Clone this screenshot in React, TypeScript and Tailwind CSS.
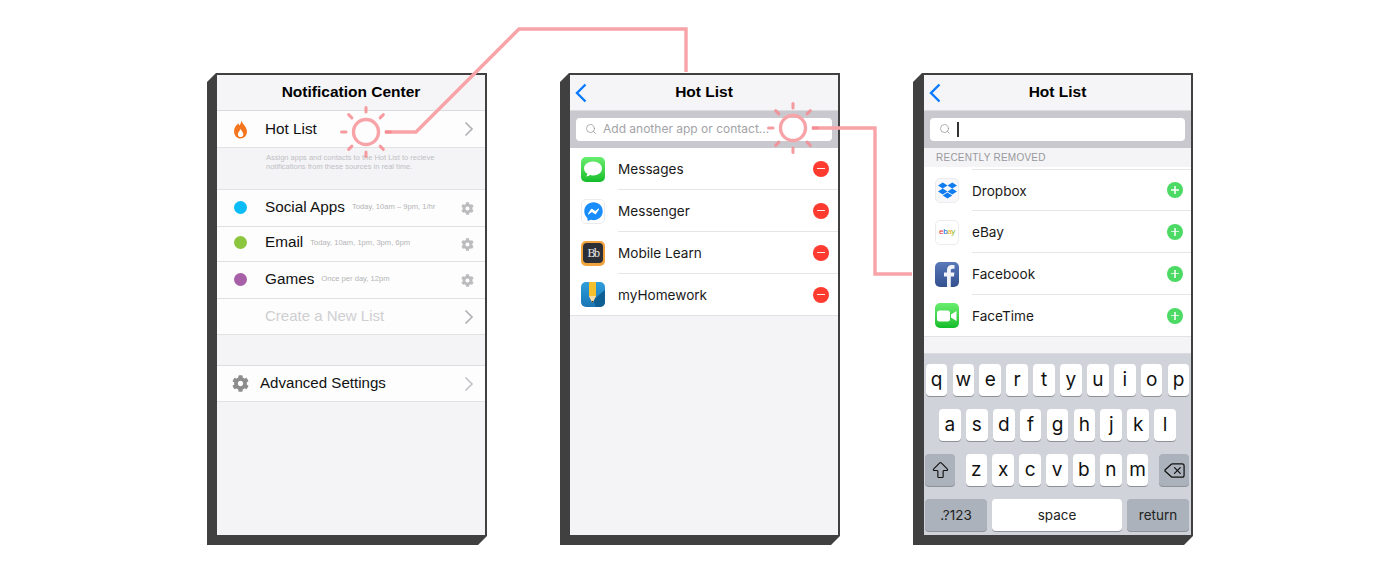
import type { ReactNode } from 'react'
import { ArrowBigUp, Delete, Search } from 'lucide-react'
import { FaCog, FaDropbox, FaFacebookMessenger } from 'react-icons/fa'

function Chevron({ light }: { light?: boolean }) {
  return (
    <svg width="10" height="16" viewBox="0 0 10 16" fill="none" className={light ? 'text-[#c4c4c8]' : 'text-[#b2b2b6]'}>
      <path d="M1.5 1.5 8 8l-6.5 6.5" stroke="currentColor" strokeWidth="1.7" />
    </svg>
  )
}

function Frame({ children, inset = 'pl-[10px]' }: { children: ReactNode; inset?: string }) {
  return (
    <div className={`h-[472px] w-[280px] bg-[#404040] pt-[2px] pr-[2px] pb-[10px] ${inset} [clip-path:polygon(9px_0,100%_0,100%_calc(100%-9px),calc(100%-9px)_100%,0_100%,0_9px)]`}>
      <div className="flex h-full flex-col overflow-hidden bg-[#f4f4f6]">{children}</div>
    </div>
  )
}

function NavBar({ title, back }: { title: string; back?: boolean }) {
  return (
    <div className="grid h-[36px] shrink-0 grid-cols-[1fr_auto_1fr] items-center border-b border-[#dcdcdf] bg-[#f5f5f7] font-['Liberation_Sans',sans-serif]">
      <div className="pl-[5px]">
        {back && (
          <svg width="12" height="20" viewBox="0 0 12 20" fill="none" className="block">
            <path d="M10.500 1.500 2 10l8.500 8.500" stroke="#0a7aff" strokeWidth="2.4" />
          </svg>
        )}
      </div>
      <div className="mb-[2px] text-[15.500px] font-bold text-black">{title}</div>
      <div />
    </div>
  )
}

function SearchField({ children }: { children: ReactNode }) {
  return (
    <div className="flex h-[37px] shrink-0 items-center bg-[#c8c8ce] px-[6px] pb-[1px]">
      <div className="flex h-[23px] w-full items-center gap-[6px] rounded-[4px] bg-white pl-[9px] font-[Inter,sans-serif]">
        <Search size={12} strokeWidth={1.4} className="text-[#8e8e93]" />
        {children}
      </div>
    </div>
  )
}

function ListRow({ icon, label, sub, right, h, muted, lift = '' }: { icon?: ReactNode; label: string; sub?: string; right: ReactNode; h: string; muted?: boolean; lift?: string }) {
  return (
    <div className={`flex shrink-0 items-center border-b border-[#e2e2e4] bg-[#fdfdfd] pr-[11px] ${h}`}>
      <div className={`flex w-[48px] justify-center pr-[2px] ${lift}`}>{icon}</div>
      <div className={`${muted ? 'text-[15px] text-[#cfcfd2]' : 'text-[15.300px] text-[#111]'} ${lift}`}>{label}</div>
      {sub && <div className={`ml-[7px] text-[7.600px] text-[#b4b4b6] ${lift}`}>{sub}</div>}
      <div className="ml-auto flex">{right}</div>
    </div>
  )
}

function Dot({ color }: { color: string }) {
  return <div className={`h-[13px] w-[13px] rounded-full ${color}`} />
}

function Flame() {
  return (
    <svg width="15" height="19" viewBox="0 0 15 20">
      <path d="M8 .5c.6 3-1 4.2-2 5.2-.4-.8-.6-1.500-.6-2.300C3 5.300.7 8 .7 11.800c0 4.300 3 7.700 6.800 7.700s6.800-3.200 6.800-7.300c0-4.700-3.800-6.900-6.300-11.700z" fill="#f4751d" />
      <path d="M7.600 9c.2 1.800-2.800 3.300-2.800 6 0 1.700 1.200 3 2.800 3s2.900-1.300 2.900-3c0-2.400-2.400-3.500-2.900-6z" fill="#fff" />
    </svg>
  )
}

function NotificationCenter() {
  const gear = <FaCog size={13} className="text-[#bcbcbe]" />
  return (
    <Frame>
      <NavBar title="Notification Center" />
      <div className="flex h-full flex-col font-['Liberation_Sans',sans-serif]">
        <ListRow h="h-[37px]" icon={<Flame />} label="Hot List" right={<Chevron />} />
        <div className="h-[42px] shrink-0 border-b border-[#e2e2e4] pt-[5px] pl-[49px] text-[7.500px] leading-[9px] text-[#c0c0c4]">
          Assign apps and contacts to the Hot List to recieve
          <br />
          notifications from these sources in real time.
        </div>
        <ListRow h="h-[37px]" lift="mb-[2px]" icon={<Dot color="bg-[#0abcf5]" />} label="Social Apps" sub="Today, 10am – 9pm, 1/hr" right={gear} />
        <ListRow h="h-[35px]" lift="mb-[3px]" icon={<Dot color="bg-[#8cc63f]" />} label="Email" sub="Today, 10am, 1pm, 3pm, 6pm" right={gear} />
        <ListRow h="h-[37px]" lift="mb-[2px]" icon={<Dot color="bg-[#a75fa8]" />} label="Games" sub="Once per day, 12pm" right={gear} />
        <ListRow h="h-[36px]" label="Create a New List" muted right={<Chevron />} />
        <div className="h-[31px] shrink-0 border-b border-[#dedee0]" />
        <div className="flex h-[36px] shrink-0 items-center border-b border-[#e2e2e4] bg-[#fdfdfd] pr-[11px] pl-[15px]">
          <FaCog size={17} className="text-[#8c8c8c]" />
          <div className="ml-[11px] text-[15.100px] text-[#111]">Advanced Settings</div>
          <div className="ml-auto flex">
            <Chevron light />
          </div>
        </div>
      </div>
    </Frame>
  )
}

function Tile({ className, children }: { className: string; children?: ReactNode }) {
  return <div className={`flex h-[25px] w-[24px] items-center justify-center overflow-hidden rounded-[5px] ${className}`}>{children}</div>
}

const tileWhite = 'border border-[#ececee] bg-white'

function AppRow({ icon, label, sign, first, last }: { icon: ReactNode; label: string; sign: 'plus' | 'minus'; first?: boolean; last?: boolean }) {
  const isPlus = sign === 'plus'
  return (
    <div className={`flex h-[42px] shrink-0 items-center bg-white pl-[11px] ${last ? 'border-b border-[#e2e2e4]' : ''}`}>
      <div className="shrink-0">{icon}</div>
      <div className={`ml-[13px] flex h-full flex-1 items-center border-[#e6e6e8] ${isPlus ? 'pr-[8px]' : 'pr-[9px]'} ${last ? '' : 'border-b'} ${first ? 'border-t' : ''}`}>
        <span className="pt-[2px] text-[13.600px] text-[#1a1a1a]">{label}</span>
        <div className={`relative ml-auto flex h-[16px] w-[16px] items-center justify-center rounded-full ${isPlus ? 'bg-[#4cd964]' : 'bg-[#ff3b30]'}`}>
          <div className={`h-[1.500px] w-[8px] ${isPlus ? 'bg-white/75' : 'bg-white/90'}`} />
          {isPlus && <div className="absolute h-[8px] w-[1.500px] bg-white/75" />}
        </div>
      </div>
    </div>
  )
}

function HotList() {
  return (
    <Frame>
      <NavBar title="Hot List" back />
      <SearchField>
        <span className="text-[12px] text-[#a3a3a8]">Add another app or contact...</span>
      </SearchField>
      <div className="font-[Inter,sans-serif]">
        <AppRow
          label="Messages"
          sign="minus"
          icon={
            <Tile className="bg-linear-to-b from-[#67ee6e] to-[#0cbd2a]">
              <svg width="20" height="18" viewBox="0 0 20 18">
                <path d="M10 1.500c5 0 9 3 9 7s-4 7-9 7c-1 0-2-.1-2.900-.4-1 .9-2.600 1.400-4.100 1.400.8-.7 1.300-1.600 1.400-2.700C2.300 12.600 1 10.700 1 8.500c0-4 4-7 9-7z" fill="#fff" />
              </svg>
            </Tile>
          }
        />
        <AppRow
          label="Messenger"
          sign="minus"
          icon={
            <Tile className={tileWhite}>
              <FaFacebookMessenger size={19} className="text-[#1a8dfc]" />
            </Tile>
          }
        />
        <AppRow
          label="Mobile Learn"
          sign="minus"
          icon={
            <Tile className="bg-[#f0a33c]">
              <div className="flex h-[20px] w-[20px] items-center justify-center rounded-[4px] bg-[#2c2f36] font-['Liberation_Serif',serif] text-[12px] leading-none tracking-[-1.500px] text-[#e8e8e8]">Bb</div>
            </Tile>
          }
        />
        <AppRow
          label="myHomework"
          sign="minus"
          last
          icon={
            <Tile className="bg-linear-to-b from-[#2f9fdc] to-[#1a75b5]">
              <svg width="24" height="25" viewBox="0 0 24 25">
                <path d="M12 18 24 8v17H15z" fill="#0f5f94" />
                <path d="M8 0h7v14l-3.500 7L8 14z" fill="#f6c02c" />
                <path d="M8 14h7l-3.500 7z" fill="#f3dcb0" />
                <path d="M10.500 19h2l-1 2z" fill="#333" />
              </svg>
            </Tile>
          }
        />
      </div>
    </Frame>
  )
}

function KeyCap({ children, wide, dark, className = '' }: { children: ReactNode; wide?: string; dark?: boolean; className?: string }) {
  return (
    <div className={`flex h-[32px] items-center justify-center rounded-[4px] shadow-[0_1px_0_#8e9198] ${dark ? 'bg-[#abb2bb]' : 'bg-white'} ${wide ?? 'w-[21.600px]'} ${className}`}>
      {children}
    </div>
  )
}

function Keyboard() {
  const letters = (keys: string) =>
    keys.split('').map((k) => (
      <KeyCap key={k} className="text-[19px] text-[#111]">
        {k}
      </KeyCap>
    ))
  return (
    <div className="flex h-full flex-col gap-[13px] border-t border-[#dcdce0] bg-[#d0d3da] pt-[10px] font-[Inter,sans-serif]">
      <div className="flex justify-center gap-[5.300px]">{letters('qwertyuiop')}</div>
      <div className="flex justify-center gap-[5.300px]">{letters('asdfghjkl')}</div>
      <div className="flex justify-between pr-[2px] pl-[1px]">
        <KeyCap dark wide="w-[30px]">
          <ArrowBigUp size={21} strokeWidth={1.3} className="text-[#111]" />
        </KeyCap>
        <div className="flex gap-[5.300px]">{letters('zxcvbnm')}</div>
        <KeyCap dark wide="w-[30px]">
          <Delete size={23} strokeWidth={1.3} className="text-[#111]" />
        </KeyCap>
      </div>
      <div className="flex justify-between pr-[2px] pl-[1px] text-[13.500px] text-[#222]">
        <KeyCap dark wide="w-[62px]">.?123</KeyCap>
        <KeyCap wide="w-[130px]">space</KeyCap>
        <KeyCap dark wide="w-[62px]">return</KeyCap>
      </div>
    </div>
  )
}

function HotListEditing() {
  return (
    <Frame inset="pl-[11px]">
      <NavBar title="Hot List" back />
      <SearchField>
        <div className="h-[15px] w-[1.500px] bg-[#333]" />
      </SearchField>
      <div className="h-[21px] shrink-0 bg-white">
        <div className="h-[19px] bg-[#f4f4f6] pt-[2px] pl-[12px] font-['Liberation_Sans',sans-serif] text-[10px] tracking-[0.25px] text-[#98989d]">
          RECENTLY REMOVED
        </div>
      </div>
      <div className="font-[Inter,sans-serif]">
        <AppRow
          label="Dropbox"
          sign="plus"
          first
          icon={
            <Tile className="border border-[#ececee] bg-[#f8f8fa]">
              <FaDropbox size={19} className="text-[#0f7df0]" />
            </Tile>
          }
        />
        <AppRow
          label="eBay"
          sign="plus"
          icon={
            <Tile className={tileWhite}>
              <span className="font-['Liberation_Sans',sans-serif] text-[8px] tracking-[-0.4px]">
                <span className="text-[#e53238]">e</span>
                <span className="text-[#0064d2]">b</span>
                <span className="text-[#f5af02]">a</span>
                <span className="text-[#86b817]">y</span>
              </span>
            </Tile>
          }
        />
        <AppRow
          label="Facebook"
          sign="plus"
          icon={
            <Tile className="bg-linear-to-b from-[#5a79b8] to-[#33508f]">
              <svg width="24" height="25" viewBox="0 0 24 25">
                <path d="M12 25V14.500H9V10.500h3V8c0-3.300 2-5 4.800-5 1.300 0 2.300.1 2.700.2v3.500h-1.900c-1.500 0-1.800.7-1.800 1.800v2h3.600l-.5 4h-3.100V25z" fill="#f2f4fa" />
              </svg>
            </Tile>
          }
        />
        <AppRow
          label="FaceTime"
          sign="plus"
          last
          icon={
            <Tile className="bg-linear-to-b from-[#67ee6e] to-[#0cbd2a]">
              <svg width="20" height="12" viewBox="0 0 20 12">
                <rect x="0" y="0.500" width="13" height="11" rx="2.500" fill="#fff" />
                <path d="M14 4.500 19.500 1v10L14 7.500z" fill="#fff" />
              </svg>
            </Tile>
          }
        />
      </div>
      <div className="h-[16px] shrink-0" />
      <Keyboard />
    </Frame>
  )
}

function Callout({ cx, cy }: { cx: number; cy: number }) {
  const rays = [0, 45, 90, 135, 180, 225, 270, 315]
  return (
    <g>
      <circle cx={cx} cy={cy} r="12.500" fill="none" stroke="#f8a3a8" strokeWidth="3.400" />
      {rays.map((deg) => (
        <line
          key={deg}
          x1={cx + 20 * Math.cos((deg * Math.PI) / 180)}
          y1={cy + 20 * Math.sin((deg * Math.PI) / 180)}
          x2={cx + 24.500 * Math.cos((deg * Math.PI) / 180)}
          y2={cy + 24.500 * Math.sin((deg * Math.PI) / 180)}
          stroke="#f48b91"
          strokeOpacity="0.85"
          strokeWidth="3"
          strokeLinecap="round"
        />
      ))}
    </g>
  )
}

export default function App() {
  return (
    <div className="relative h-[580px] w-[1400px] overflow-hidden bg-white">
      <div className="flex justify-center gap-[73px] pt-[73px]">
        <NotificationCenter />
        <HotList />
        <HotListEditing />
      </div>

      {/* callouts linking the screens */}
      <svg className="absolute top-0 left-0" width="1400" height="580" fill="none">
        <path d="M385 132h31L519 29h167v43" stroke="#f8a3a8" strokeWidth="3.400" />
        <path d="M812 128h63v146h37" stroke="#f8a3a8" strokeWidth="3.400" />
        <Callout cx={366} cy={132} />
        <Callout cx={793} cy={128} />
      </svg>
    </div>
  )
}
